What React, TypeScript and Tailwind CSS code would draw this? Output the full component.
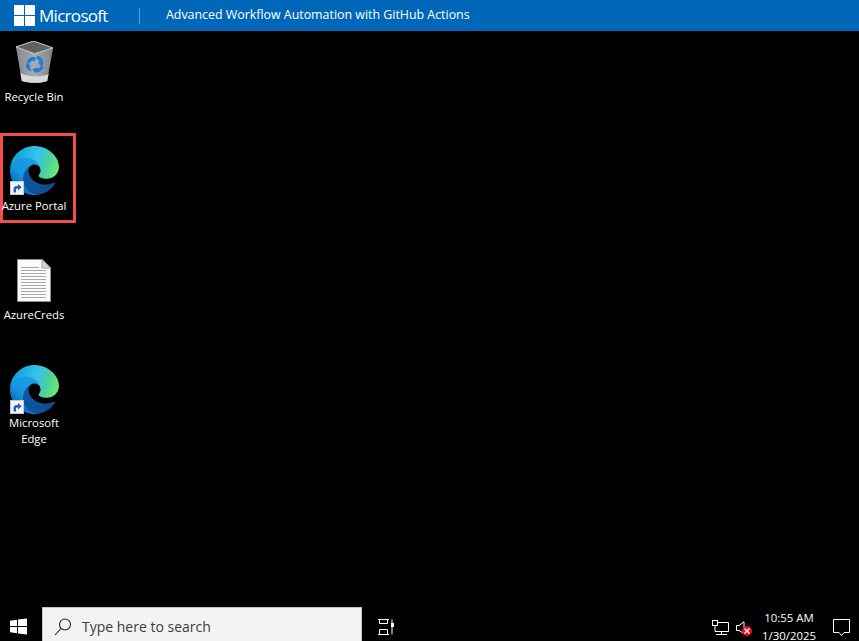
const font = { fontFamily: '"Open Sans", "Noto Sans", sans-serif' };

function EdgeIcon({ id }: { id: string }) {
  return (
    <svg width="49" height="49" viewBox="0 0 256 256">
      <defs>
        <linearGradient id={`${id}a`} x1="60" y1="180" x2="235" y2="180" gradientUnits="userSpaceOnUse">
          <stop offset="0" stopColor="#0c59a4" />
          <stop offset="1" stopColor="#114a8b" />
        </linearGradient>
        <linearGradient id={`${id}b`} x1="150" y1="100" x2="40" y2="220" gradientUnits="userSpaceOnUse">
          <stop offset="0" stopColor="#1b9de2" />
          <stop offset="0.6" stopColor="#1595df" />
          <stop offset="1" stopColor="#0669bc" />
        </linearGradient>
        <linearGradient id={`${id}c`} x1="30" y1="40" x2="250" y2="110" gradientUnits="userSpaceOnUse">
          <stop offset="0" stopColor="#0fa5d6" />
          <stop offset="0.45" stopColor="#35c1f1" />
          <stop offset="0.75" stopColor="#4bd0a0" />
          <stop offset="1" stopColor="#66eb6e" />
        </linearGradient>
      </defs>
      <path fill={`url(#${id}a)`} d="M231.3 190.5c-3.4 1.8-6.9 3.4-10.5 4.7a101.6 101.6 0 0 1-35.8 6.4c-47.2 0-88.3-32.4-88.3-74 .1-11.4 6.4-21.8 16.4-27.2-42.7 1.8-53.7 46.3-53.7 72.3 0 73.8 68 81.3 82.7 81.3 7.9 0 19.8-2.3 27-4.6l1.3-.4c27.5-9.5 50.8-28.1 66.1-52.7 1.4-2.3-1.1-5.1-3.5-3.8Z" />
      <path fill={`url(#${id}b)`} d="M105.7 241.4a79 79 0 0 1-22.7-21.3 80.6 80.6 0 0 1 29.5-119.8c3.2-1.5 8.5-4.1 15.6-4 10.1.1 19.6 4.9 25.7 13 4 5.4 6.2 11.9 6.3 18.6 0-.2 24.5-79.6-80-79.6-43.9 0-80 41.7-80 78.2-.2 19.3 4 38.5 12.1 56 27.6 58.9 94.9 87.8 156.6 67.3-21.1 6.7-44.1 3.8-62.9-7.9Z" />
      <path fill={`url(#${id}c)`} d="M152.3 148.9c-.8 1.1-3.3 2.6-3.3 5.8 0 2.6 1.7 5.1 4.7 7.2 14.4 10 41.5 8.7 41.6 8.7 10.7 0 21.1-2.9 30.2-8.3 18.6-10.9 30.1-30.8 30.1-52.4.3-22.4-8-37.3-11.3-43.9C222.8 27.6 177.1 0 128 0 57.9 0 .8 56.4-.2 126.5c.5-36.6 36.9-66.2 80-66.2 3.5 0 23.5.3 42 10.1 16.3 8.6 24.9 18.9 30.8 29.1 6.2 10.7 7.3 24.2 7.3 29.6 0 5.4-2.7 13.3-7.6 20Z" />
    </svg>
  );
}

function ShortcutBadge() {
  return (
    <svg className="absolute left-0 bottom-0" width="14" height="14" viewBox="0 0 14 14">
      <rect x="0.5" y="0.5" width="13" height="13" fill="#f2f4f7" stroke="#c5c8cc" />
      <path d="M3.6 11.5V8.2C3.6 6.2 5 5 7 5H8V3L11.6 6.2 8 9.4V7.4H7.4C6.4 7.4 6 7.9 6 8.8V11.5Z" fill="#1f5fb4" />
    </svg>
  );
}

function RecycleBin() {
  return (
    <svg width="39" height="43" viewBox="0 0 40 44">
      <defs>
        <linearGradient id="binBody" x1="0" y1="0" x2="1" y2="0">
          <stop offset="0" stopColor="#85888a" />
          <stop offset="0.5" stopColor="#a9acae" />
          <stop offset="1" stopColor="#808385" />
        </linearGradient>
      </defs>
      <path d="M1 6 19 0 39 7 33 41C25 44 13 43 7 41Z" fill="url(#binBody)" />
      <path d="M1 6 19 0 39 7 20 13Z" fill="#5f6162" stroke="#c9cbcc" strokeWidth="1" />
      <path d="M5.5 33C14 37 26 37 34.5 34L33 41C25 44 13 43 7 41Z" fill="#d5d9da" />
      <path d="M12 22a8 8 0 0 1 6-6l4 1-2 4-2-1a5 5 0 0 0-3 3Z" fill="#1a7fe0" />
      <path d="M23 15a8 8 0 0 1 6 8l-2 3-3-4 1-1a5 5 0 0 0-3-3Z" fill="#1a7fe0" />
      <path d="M29 27a8 8 0 0 1-9 5l-2-3 4-2 1 1a5 5 0 0 0 4-3Z" fill="#1a7fe0" />
      <path d="M16 31a8 8 0 0 1-5-8l3 0 2 4-1 0a5 5 0 0 0 2 3Z" fill="#1a7fe0" />
    </svg>
  );
}

function TextFile() {
  return (
    <svg width="34" height="43" viewBox="0 0 34 43">
      <path d="M.5.5H25L33.5 9V42.5H.5Z" fill="#fbfbfb" stroke="#8e8e8e" />
      <path d="M25 .5V9H33.5Z" fill="#d6d6d6" stroke="#a5a5a5" />
      <path d="M4 8.5H22M4 11.5H29M4 14.5H29M4 17.5H29M4 20.5H29M4 23.5H29M4 26.5H29M4 29.5H29M4 32.5H29M4 35.5H29M4 38.5H29" stroke="#a9a9a9" />
    </svg>
  );
}

function DesktopLabel({ children }: { children: React.ReactNode }) {
  return <div className="text-center text-white text-[11.3px] leading-[16px]">{children}</div>;
}

export default function App() {
  return (
    <div className="h-screen w-full bg-black flex flex-col overflow-hidden" style={font}>
      <header className="h-[31px] bg-[#0067b8] flex items-center shrink-0 pl-[14px] text-white">
        <svg width="21" height="21" viewBox="0 0 21 21" className="shrink-0">
          <path d="M0 0h10v10H0zM11 0h10v10H11zM0 11h10v10H0zM11 11h10v10H11z" fill="#fff" />
        </svg>
        <span className="ml-[4px] w-[71px] text-[17px] font-medium tracking-[-0.7px] leading-none">Microsoft</span>
        <div className="ml-[29px] w-px h-[16px] bg-[#5c9fd6]" />
        <span className="ml-[26px] text-[12.4px] font-medium leading-none whitespace-nowrap">
          Advanced Workflow Automation with GitHub Actions
        </span>
      </header>

      <main className="flex-1 relative">
        <div className="absolute left-0 top-[10px] w-[68px] flex flex-col items-center">
          <RecycleBin />
          <div className="mt-[5px]"><DesktopLabel>Recycle Bin</DesktopLabel></div>
        </div>

        <div className="absolute left-0 top-[102px] w-[76px] h-[90px] border-[3px] border-[#f24c4f]" />
        <div className="absolute left-0 top-[115px] w-[68px] flex flex-col items-center">
          <div className="relative w-[49px] h-[49px]">
            <EdgeIcon id="edgeA" />
            <ShortcutBadge />
          </div>
          <div className="mt-[3px]"><DesktopLabel>Azure Portal</DesktopLabel></div>
        </div>

        <div className="absolute left-0 top-[228px] w-[68px] flex flex-col items-center">
          <TextFile />
          <div className="mt-[5px]"><DesktopLabel>AzureCreds</DesktopLabel></div>
        </div>

        <div className="absolute left-0 top-[334px] w-[68px] flex flex-col items-center">
          <div className="relative w-[49px] h-[49px]">
            <EdgeIcon id="edgeB" />
            <ShortcutBadge />
          </div>
          <div className="mt-[1px]"><DesktopLabel>Microsoft<br />Edge</DesktopLabel></div>
        </div>
      </main>

      <footer className="h-[34px] shrink-0 flex items-stretch text-white">
        <div className="w-[42px] flex items-end pl-[10px] pb-[6px]">
          <svg width="17" height="17" viewBox="0 0 17 16">
            <path d="M0 2.3 7 1.3V7.5H0ZM8 1.1 17 0V7.5H8ZM0 8.5H7V14.7L0 13.7ZM8 8.5H17V16L8 14.9Z" fill="#fff" />
          </svg>
        </div>
        <div className="w-[320px] bg-[#f3f3f3] border-t border-x border-[#c4c4c4] flex items-center pl-[11px] pt-[5px] text-[#3c3c3c]">
          <svg width="18" height="18" viewBox="0 0 18 18" fill="none" stroke="#222" strokeWidth="1.1" className="-mt-[1px]">
            <circle cx="11" cy="6.5" r="5.5" />
            <path d="M7 10.5 1 17" />
          </svg>
          <span className="ml-[10px] text-[14px] leading-none">Type here to search</span>
        </div>
        <div className="w-[16px] ml-[16px] flex items-end pb-[6px]">
          <svg width="16" height="16" viewBox="0 0 16 16" fill="none" stroke="#fff">
            <path d="M0 .5H11M0 15.5H11M1.5 .5V4.5H9.5V.5M1.5 15.5V10.5H9.5V15.5" />
            <path d="M14 .5V15.5" />
            <rect x="13" y="4" width="3" height="4" fill="#fff" stroke="none" />
          </svg>
        </div>
        <div className="ml-auto flex items-end">
          <svg width="17" height="15" viewBox="0 0 17 15" fill="none" stroke="#fff" className="mb-[6px]">
            <path d="M3.5 2.5H16.5V11.5H6M9.5 11.5V14.5M4 14.5H15" />
            <rect x="0.5" y="0.5" width="5" height="5" fill="#000" />
            <path d="M3 5.5V11.5H6" />
          </svg>
          <div className="relative w-[16px] h-[15px] ml-[7px] mb-[5px]">
            <svg width="10" height="14" viewBox="0 0 10 14" fill="none" stroke="#fff">
              <path d="M.5 4.5H3L8 .8V12.7L3 9.5H.5Z" />
            </svg>
            <div className="absolute right-0 bottom-0 w-[10px] h-[10px] rounded-full bg-[#e81123] flex items-center justify-center">
              <svg width="6" height="6" viewBox="0 0 6 6" stroke="#fff" strokeWidth="1.2"><path d="M.5.5 5.5 5.5M5.5.5.5 5.5" /></svg>
            </div>
          </div>
          <div className="w-[74px] h-full flex flex-col items-center gap-[7px] pt-[5px] text-[11.4px] leading-[11px] whitespace-nowrap">
            <span>10:55 AM</span>
            <span>1/30/2025</span>
          </div>
          <svg width="17" height="18" viewBox="0 0 17 18" fill="none" stroke="#fff" className="ml-[7px] mr-[9px] mb-[4px]">
            <path d="M.5.5H16.5V13.5H11L8.5 16.5 6 13.5H.5Z" />
          </svg>
        </div>
      </footer>
    </div>
  );
}
